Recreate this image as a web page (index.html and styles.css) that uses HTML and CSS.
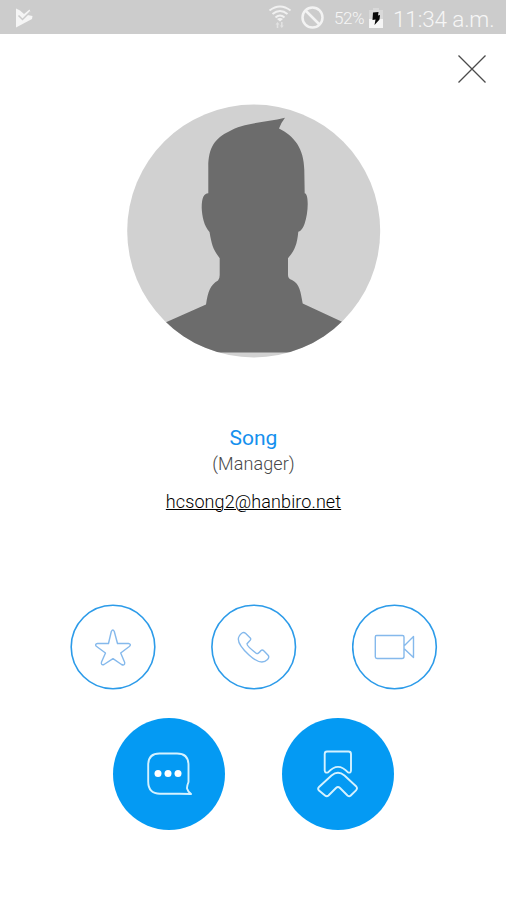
FILE: index.html
```html
<!DOCTYPE html>
<html lang="en">
<head>
<meta charset="utf-8">
<title>Song</title>
<link rel="stylesheet" href="styles.css">
</head>
<body>
<header class="status">
  <svg class="status-app" viewBox="15 8 19 20" width="19" height="20"><path d="M16 8.5 20 10.500 24 14 29.500 9.500 30.500 12 27.500 15 32.500 16 32 19 16 27.500Z" fill="#f5f5f5"/><path d="m18.500 15.500 4 4 8-8" fill="none" stroke="#ccc" stroke-width="1.500"/></svg>
  <svg class="status-wifi" viewBox="268 5 24 24" width="24" height="24"><g fill="none" stroke="#f1f1f1" stroke-width="2"><path d="M269.500 10.500q10.500-8 21 0M272.500 14q7.500-6 15 0M275.500 17.500q4.500-4 9 0"/></g><path d="m277 19 3 2.500 3-2.500q-3-2-6 0Z" fill="#f1f1f1"/><path d="m275.500 24.500 2-2.500 2 2.500h-1.200V28h-1.600v-3.500ZM281 25.500V22h1.600v3.500h1.200l-2 2.500-2-2.500Z" fill="#e2e2e2"/></svg>
  <svg class="status-block" viewBox="300 5 25 25" width="25" height="25"><g fill="none" stroke="#f3f3f3" stroke-width="2.500"><circle cx="312.500" cy="17.500" r="10"/><path d="m305.500 10.500 14 14"/></g></svg>
  <span class="battery-text">52%</span>
  <svg class="status-battery" viewBox="368 7 16 22" width="16" height="22"><path d="M369 10h4V8h6v2h4v10h-14Z" fill="#d9d9d9"/><path d="M369 19h14v9h-14Z" fill="#f5f5f5"/><path d="m373 12.500 5.500-.5-.5 3.500 2-.5-.5 4.500-5 5.500 1-5.500-3 .5Z" fill="#080808"/></svg>
  <span class="clock">11:34 a.m.</span>
</header>
<main class="profile">
  <button class="close" aria-label="Close"><svg viewBox="0 0 30 30" width="30" height="30"><path d="m1.500 1.500 27 27M28.500 1.500l-27 27" fill="none" stroke="#4b4b4b" stroke-width="1.300"/></svg></button>
  <svg class="avatar" viewBox="127 104 254 254" width="254" height="254">
    <clipPath id="disc"><circle cx="253.700" cy="231" r="126.500"/></clipPath>
    <g clip-path="url(#disc)"><path d="M127 104h254v254H127Z" fill="#d1d1d1"/>
    <path d="M285 117.700Q281.500 122 279 128.500C294 136 304 148 304.300 170L304.700 193.300C309 194 308.500 213 304.500 224Q302 231 298.300 231.700C297 246 294 251 288 258.300V275Q288 279 292 280C300 284 300.500 292 302.700 303.500L342 321.700 345 352.500H160L166 322.300 206 304.500C208 292 210 285 218 280.500Q219.700 279 219.700 275V258.300C213 249 212 246 209.500 232C204 226 202 216 201.700 208Q201.500 193.500 208.300 193.300V168C208 148 215 138 229 131.500C243 123 265 122.500 285 117.700Z" fill="#6c6c6c"/></g>
  </svg>
  <h1 class="name">Song</h1>
  <p class="role">(Manager)</p>
  <a class="email">hcsong2@hanbiro.net</a>
  <div class="actions">
    <button class="action" aria-label="Favorite"><svg viewBox="70 604 86 86" width="86" height="86"><circle cx="113" cy="647" r="41.800"/><path d="M111.300 631.500Q112.900 628.500 114.300 631.500L117.500 643.500H128.500Q131.800 644.300 129.300 646.500L120.700 653 124.700 662.500Q125 666 121.500 664.500L113 658.700 104 664.500Q100.700 665.500 101.500 662L105.500 653 96.300 646.300Q94.500 644 97.500 643.500H108.500Z"/></svg></button>
    <button class="action" aria-label="Call"><svg viewBox="211 604 86 86" width="86" height="86"><circle cx="253.700" cy="647" r="41.800"/><path d="M242 633Q243.800 631.700 245.500 633.300L250.500 638.300Q251.300 639.500 249.500 641L247 643.700Q246.500 646 256.500 653.500Q258 654.300 261 650.500Q262.300 649.300 264 651L268.300 655.500Q269.500 657.300 267.500 659.500C263 664 256 661.500 249 655C241 647.500 236.500 641 239 636.500Q240 634.300 242 633Z"/></svg></button>
    <button class="action" aria-label="Video call"><svg viewBox="352 604 86 86" width="86" height="86"><circle cx="394.500" cy="647" r="41.800"/><path d="M376.500 635.500H402.500Q404 635.500 404 637V656.500Q404 658.500 402 658.500H377Q375.300 658.500 375.300 656.800V637Q375.300 635.500 376.500 635.500ZM404.500 645.500 413.500 636.500V657.500L404.500 649"/></svg></button>
  </div>
  <div class="actions-main">
    <button class="primary" aria-label="Message"><svg viewBox="113 718 112 112" width="112" height="112"><path d="M159.500 753.500H177Q188.500 753.500 188.500 765V782C186 788 186.500 790 191 794L179.500 793.700H160Q148.200 793.700 148.200 781.500V765Q148.200 753.500 159.500 753.500Z"/><g class="dots"><circle cx="158" cy="773.500" r="3.500"/><circle cx="168" cy="773.500" r="3.500"/><circle cx="178" cy="773.500" r="3.500"/></g></svg></button>
    <button class="primary" aria-label="Organization"><svg viewBox="282 718 112 112" width="112" height="112"><path d="M327 751.500H348.500Q351 751.500 351 754V770.500Q350.800 773.500 348 772.300C341 765 335 765 328 772.300Q325 773.500 324.700 770.500V754Q324.700 751.500 327 751.500ZM319 787 331.500 775.500Q338 770 344.500 775.500L356.300 786.500Q357.800 788.500 356 790.300L350.500 795.700Q349.300 797 347.500 795.500L340 788Q338 786 336 788L328.500 795.500Q326.800 797 325 795.500L319 790.500Q317.300 788.700 319 787Z"/></svg></button>
  </div>
</main>
</body>
</html>
```
FILE: styles.css
```css
* { box-sizing: border-box; }
body {
  margin: 0;
  width: 506px;
  height: 900px;
  background: #fff;
  font-family: Roboto, sans-serif;
  overflow: hidden;
}
svg { display: block; flex: none; }
button { border: 0; padding: 0; background: none; }
.status {
  display: flex;
  align-items: flex-start;
  height: 34px;
  padding: 5px 0 0 15px;
  background: #ccc;
  color: #f6f6f6;
  white-space: nowrap;
}
.status-app { margin-top: 3px; }
.status-wifi { margin-left: 234px; }
.status-block { margin-left: 8px; }
.battery-text {
  width: 34px;
  margin: 3px 0 0 9px;
  font-size: 17px;
  line-height: 20px;
  letter-spacing: -0.4px;
  font-weight: 300;
}
.status-battery { margin-top: 2px; }
.clock {
  margin: 1px 0 0 9px;
  font-size: 22.5px;
  line-height: 26px;
  letter-spacing: -0.15px;
  font-weight: 300;
}
.profile {
  display: flex;
  flex-direction: column;
  align-items: center;
}
.close {
  align-self: flex-end;
  margin: 20px 19px 0 0;
}
.avatar { margin-top: 20px; margin-left: 2px; }
.name {
  margin: 67px 0 0 1px;
  color: #1590ee;
  font-size: 21px;
  line-height: 26px;
  font-weight: 400;
}
.role {
  margin: 2px 0 0 1px;
  color: #484848;
  font-size: 18px;
  line-height: 22px;
  font-weight: 300;
  letter-spacing: 0.1px;
}
.email {
  margin: 16px 0 0 1px;
  color: #000;
  font-size: 18px;
  line-height: 22px;
  font-weight: 300;
  letter-spacing: 0.1px;
  text-decoration: underline;
  text-decoration-thickness: 1px;
}
.actions {
  display: flex;
  gap: 55px;
  margin-top: 91px;
  margin-left: 2px;
}
.action svg { fill: none; stroke: #85b9ec; stroke-width: 1.4; stroke-linejoin: round; }
.action circle { stroke: #2c9be9; stroke-width: 1.6; }
.actions-main {
  display: flex;
  gap: 57px;
  margin-top: 28px;
  margin-left: 1px;
}
.primary {
  width: 112px;
  height: 112px;
  border-radius: 50%;
  background: #049af3;
}
.primary svg { fill: none; stroke: #d5f2ff; stroke-width: 1.9; stroke-linejoin: round; }
.primary .dots { fill: #fff; stroke: none; }
```
